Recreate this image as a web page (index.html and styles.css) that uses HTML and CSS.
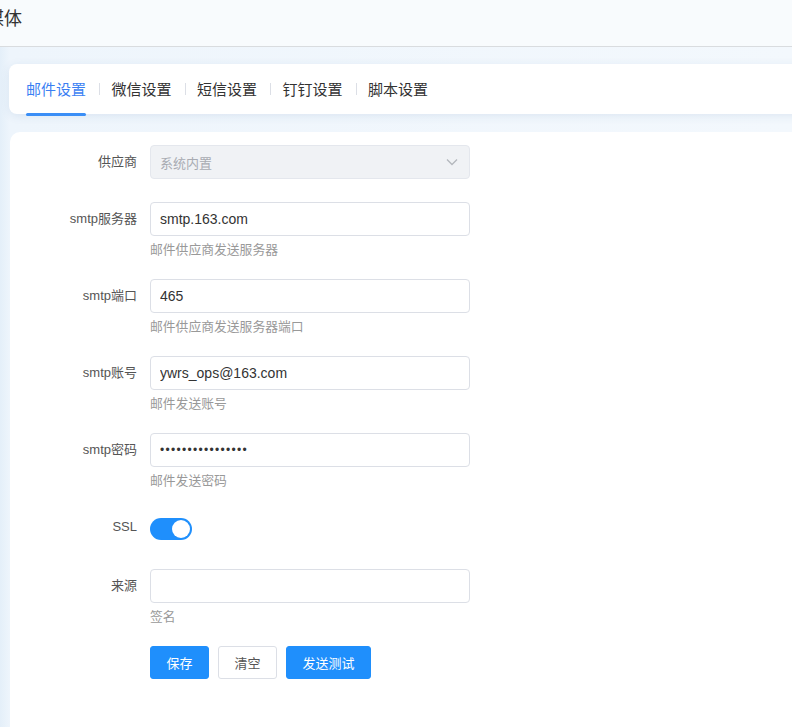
FILE: index.html
```html
<!DOCTYPE html>
<html lang="zh-CN">
<head>
<meta charset="utf-8">
<title>媒体</title>
<link rel="stylesheet" href="styles.css">
</head>
<body>
<header class="header">
  <h1 class="title">媒体</h1>
</header>
<main class="main">
  <nav class="tabs">
    <a class="tab active">邮件设置</a>
    <span class="divider"></span>
    <a class="tab">微信设置</a>
    <span class="divider"></span>
    <a class="tab">短信设置</a>
    <span class="divider"></span>
    <a class="tab">钉钉设置</a>
    <span class="divider"></span>
    <a class="tab">脚本设置</a>
  </nav>
  <section class="card">
    <form class="form">
      <div class="item item-plain">
        <label class="label">供应商</label>
        <div class="control">
          <div class="select">
            <span>系统内置</span>
            <svg class="chev" width="14" height="14" viewBox="0 0 14 14"><path d="M2 4.5 L7 9.5 L12 4.5" fill="none" stroke="#b4b7bd" stroke-width="1.3"/></svg>
          </div>
        </div>
      </div>
      <div class="item">
        <label class="label">smtp服务器</label>
        <div class="control">
          <input class="input" type="text" value="smtp.163.com">
          <div class="help">邮件供应商发送服务器</div>
        </div>
      </div>
      <div class="item">
        <label class="label">smtp端口</label>
        <div class="control">
          <input class="input" type="text" value="465">
          <div class="help">邮件供应商发送服务器端口</div>
        </div>
      </div>
      <div class="item">
        <label class="label">smtp账号</label>
        <div class="control">
          <input class="input" type="text" value="ywrs_ops@163.com">
          <div class="help">邮件发送账号</div>
        </div>
      </div>
      <div class="item">
        <label class="label">smtp密码</label>
        <div class="control">
          <input class="input pwd" type="text" value="••••••••••••••••">
          <div class="help">邮件发送密码</div>
        </div>
      </div>
      <div class="item item-switch">
        <label class="label">SSL</label>
        <div class="control switch-wrap">
          <span class="switch"><span class="knob"></span></span>
        </div>
      </div>
      <div class="item">
        <label class="label">来源</label>
        <div class="control">
          <input class="input" type="text" value="">
          <div class="help">签名</div>
        </div>
      </div>
      <div class="actions">
        <button type="button" class="btn primary">保存</button>
        <button type="button" class="btn plain">清空</button>
        <button type="button" class="btn primary wide">发送测试</button>
      </div>
    </form>
  </section>
</main>
</body>
</html>
```
FILE: styles.css
```css
html, body {
  margin: 0;
  padding: 0;
}
body {
  width: 792px;
  height: 727px;
  overflow: hidden;
  background: linear-gradient(90deg, #e4eff9 0px, #eef5fc 10px, #f3f8fd 100%);
  font-family: "Liberation Sans", "Noto Sans CJK SC", sans-serif;
  color: #333;
}
.header {
  height: 46px;
  background: #f8fbfd;
  border-bottom: 1px solid #d9dcdf;
  box-sizing: content-box;
}
.title {
  margin: 0 0 0 -14px;
  font-size: 18px;
  font-weight: normal;
  line-height: 34px;
  color: #333;
  font-family: "Noto Sans CJK SC", sans-serif;
}
.main {
  padding: 17px 0 0 9px;
}
.tabs {
  display: flex;
  align-items: center;
  height: 50px;
  margin-right: -20px;
  padding-left: 17px;
  background: #fff;
  border-radius: 8px 0 0 8px;
  box-shadow: 0 2px 10px rgba(40, 90, 150, 0.10);
}
.tab {
  position: relative;
  height: 50px;
  line-height: 50px;
  font-size: 15px;
  color: #333;
  font-family: "Noto Sans CJK SC", sans-serif;
  cursor: pointer;
}
.tab.active {
  color: #3b7ff3;
}
.tab.active::after {
  content: "";
  position: absolute;
  left: 0;
  right: 0;
  bottom: -2px;
  height: 3px;
  border-radius: 2px;
  background: #3a8ef6;
}
.divider {
  width: 1px;
  height: 12px;
  background: #dcdfe6;
  margin: 0 11.5px 0 13px;
}
.card {
  margin-top: 18px;
  margin-left: 1px;
  margin-right: -20px;
  height: 582px;
  background: #fff;
  border-radius: 10px 0 0 0;
  padding-top: 13px;
}
.form {
  display: flex;
  flex-direction: column;
}
.item {
  display: flex;
  align-items: flex-start;
  margin-bottom: 20px;
}
.item-plain {
  margin-bottom: 23px;
}
.label {
  width: 140px;
  box-sizing: border-box;
  padding-right: 13px;
  text-align: right;
  font-size: 13px;
  line-height: 34px;
  color: #555;
}
.control {
  width: 320px;
}
.select {
  height: 34px;
  box-sizing: border-box;
  border: 1px solid #e4e7ed;
  border-radius: 4px;
  background: #f0f2f5;
  display: flex;
  align-items: center;
  justify-content: space-between;
  padding: 0 10px 0 9px;
  font-size: 13px;
  color: #a8abb2;
}
.chev {
  display: block;
}
.input {
  display: block;
  width: 100%;
  height: 34px;
  box-sizing: border-box;
  border: 1px solid #dcdfe6;
  border-radius: 4px;
  padding: 0 9px;
  font-family: "Liberation Sans", "Noto Sans CJK SC", sans-serif;
  font-size: 14px;
  color: #333;
  background: #fff;
  outline: none;
}
.input.pwd {
  font-size: 12px;
  letter-spacing: 1.3px;
}
.help {
  padding-top: 3px;
  font-size: 12.8px;
  line-height: 20px;
  color: #999;
  font-family: "Noto Sans CJK SC", sans-serif;
}
.item-switch {
  margin-bottom: 23px;
}
.switch-wrap {
  height: 34px;
  display: flex;
  align-items: center;
  padding-top: 2px;
}
.switch {
  position: relative;
  display: inline-block;
  width: 42px;
  height: 22px;
  border-radius: 11px;
  background: #1f8ffc;
}
.knob {
  position: absolute;
  right: 2px;
  top: 2px;
  width: 18px;
  height: 18px;
  border-radius: 50%;
  background: #fff;
}
.actions {
  display: flex;
  gap: 9px;
  padding-left: 140px;
  margin-top: 0;
}
.btn {
  height: 33px;
  width: 59px;
  box-sizing: border-box;
  border-radius: 3px;
  font-size: 13px;
  font-family: "Noto Sans CJK SC", sans-serif;
  cursor: pointer;
  padding: 0;
}
.btn.wide {
  width: 85px;
}
.btn.primary {
  background: #1f8ffc;
  border: 1px solid #1f8ffc;
  color: #fff;
}
.btn.plain {
  background: #fff;
  border: 1px solid #dcdfe6;
  color: #555;
}
```
